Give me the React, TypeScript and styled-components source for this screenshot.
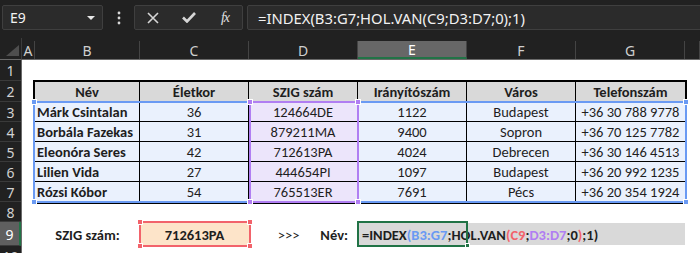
import React from "react";
import styled, { createGlobalStyle } from "styled-components";

const UI_FONT = `"Noto Sans", "Open Sans", sans-serif`;
const CELL_FONT = `Carlito, Lato, "Liberation Sans", sans-serif`;

const GlobalStyle = createGlobalStyle`
  html, body { margin: 0; padding: 0; background: #212121; overflow: hidden; }
  #root { width: 700px; height: 253px; overflow: hidden; }
  * { box-sizing: border-box; }
`;

const Page = styled.div`
  width: 700px;
  height: 253px;
  display: flex;
  flex-direction: column;
  background: #212121;
  overflow: hidden;
`;

/* ---------- toolbar ---------- */
const Toolbar = styled.div`
  height: 38px;
  flex: none;
  display: flex;
  align-items: flex-start;
  padding: 5px 0 0 2px;
  font-family: ${UI_FONT};
`;

const Box = styled.div<{ $w?: number }>`
  height: 25px;
  background: #2b2b2b;
  border: 1px solid #3f3f3f;
  border-radius: 2px;
  display: flex;
  align-items: center;
  ${(p) => (p.$w ? `width: ${p.$w}px; flex: none;` : `flex: 1; margin-right: -4px;`)}
`;

const NameText = styled.span`
  color: #f2f2f2;
  font-size: 14px;
  padding-left: 7px;
  flex: 1;
`;

const Caret = styled.span`
  width: 0;
  height: 0;
  border-left: 4px solid transparent;
  border-right: 4px solid transparent;
  border-top: 4px solid #e8e8e8;
  margin-right: 7px;
`;

const Dots = styled.div`
  width: 31px;
  height: 25px;
  flex: none;
  display: flex;
  align-items: center;
  justify-content: center;
`;

const BtnGroup = styled(Box)`
  margin-right: 4px;
  justify-content: flex-start;
  padding: 0;
`;

const IconBtn = styled.span`
  width: 36px;
  flex: none;
  display: flex;
  align-items: center;
  justify-content: center;
  color: #d6d6d6;
`;

const Fx = styled.span`
  font-family: "Liberation Serif", "DejaVu Serif", serif;
  font-style: italic;
  font-size: 14px;
  color: #e0e0e0;
  letter-spacing: -1px;
`;

const FormulaText = styled.span`
  color: #f2f2f2;
  font-size: 14.8px;
  padding-left: 10px;
  white-space: nowrap;
`;

/* ---------- sheet ---------- */
const Sheet = styled.div`
  flex: 1;
  display: grid;
  grid-template-columns: 22px 1fr;
  grid-template-rows: 22px 1fr;
  min-height: 0;
`;

const Corner = styled.div`
  border-bottom: 1px solid #6a6a6a;
  border-right: 1px solid #3c3c3c;
  display: flex;
  align-items: flex-end;
  justify-content: flex-end;
  padding: 0 2px 3px 0;
`;

const ColHeaders = styled.div`
  display: flex;
  padding-top: 3px;
  border-bottom: 1px solid #6a6a6a;
`;

const ColHead = styled.div<{ $w?: number; $active?: boolean }>`
  ${(p) => (p.$w ? `width: ${p.$w}px; flex: none;` : `flex: 1;`)}
  border-right: 1px solid #444;
  font-family: ${UI_FONT};
  font-size: 14px;
  color: ${(p) => (p.$active ? "#ffffff" : "#cfcfcf")};
  background: ${(p) => (p.$active ? "#676767" : "transparent")};
  border-bottom: ${(p) => (p.$active ? "2px solid #217346" : "none")};
  display: flex;
  align-items: center;
  justify-content: center;
  line-height: 1;
  padding-top: 1px;
`;

const RowHeaders = styled.div`
  display: flex;
  flex-direction: column;
  border-right: 1px solid #6a6a6a;
  overflow: hidden;
`;

const RowHead = styled.div<{ $h: number; $active?: boolean }>`
  height: ${(p) => p.$h}px;
  flex: none;
  border-bottom: 1px solid #3a3a3a;
  font-family: ${UI_FONT};
  font-size: 14px;
  color: ${(p) => (p.$active ? "#ffffff" : "#d2d2d2")};
  background: ${(p) => (p.$active ? "#5f5f5f" : "transparent")};
  border-right: ${(p) => (p.$active ? "2px solid #217346" : "none")};
  display: flex;
  align-items: center;
  justify-content: center;
  padding-top: 1px;
`;

const Canvas = styled.div`
  background: #ffffff;
  position: relative;
  display: flex;
  flex-direction: column;
  padding-top: 20px;
  font-family: ${CELL_FONT};
  font-size: 14.5px;
  color: #1e1e1e;
  overflow: hidden;
`;

const Table = styled.div`
  margin-left: 11px;
  width: 654px;
  border: 2px solid #000;
  display: grid;
  grid-template-columns: 105px repeat(5, 109px);
  grid-auto-rows: 20px;
`;

const Cell = styled.div<{
  $head?: boolean;
  $tint?: "blue" | "purple";
  $left?: boolean;
  $lastCol?: boolean;
  $lastRow?: boolean;
}>`
  border-right: ${(p) => (p.$lastCol ? "none" : "1px solid #000")};
  border-bottom: ${(p) => (p.$lastRow ? "none" : "1px solid #000")};
  background: ${(p) =>
    p.$head ? "#d9d9d9" : p.$tint === "purple" ? "#ece5fb" : "#eaf1fd"};
  font-weight: ${(p) => (p.$head || p.$left ? 700 : 400)};
  display: flex;
  align-items: center;
  justify-content: ${(p) => (p.$left ? "flex-start" : "center")};
  padding-left: ${(p) => (p.$left ? "2px" : "0")};
  white-space: nowrap;
  line-height: 1;
  padding-top: 1px;
`;

const Range = styled.div<{ $color: string }>`
  position: absolute;
  border: 2px solid ${(p) => p.$color};
  pointer-events: none;
`;

const Handle = styled.span<{ $color: string; $pos: "tl" | "tr" | "bl" | "br" }>`
  position: absolute;
  width: 6px;
  height: 6px;
  background: ${(p) => p.$color};
  border: 1px solid #ffffff;
  ${(p) => (p.$pos[0] === "t" ? "top: -4px;" : "bottom: -4px;")}
  ${(p) => (p.$pos[1] === "l" ? "left: -4px;" : "right: -4px;")}
`;

const Row9 = styled.div`
  margin-top: 18px;
  margin-left: 13px;
  height: 24px;
  display: flex;
  align-items: stretch;
  font-weight: 700;
`;

const LabelCell = styled.div<{ $w: number }>`
  width: ${(p) => p.$w}px;
  flex: none;
  display: flex;
  align-items: center;
  justify-content: center;
  padding-top: 1px;
`;

const LookupCell = styled.div`
  width: 109px;
  flex: none;
  position: relative;
  background: #fde4c9;
  display: flex;
  align-items: center;
  justify-content: center;
  padding-top: 1px;
`;

const PointerCell = styled.div`
  width: 109px;
  flex: none;
  display: flex;
  align-items: center;
  justify-content: flex-end;
  gap: 21px;
  padding: 1px 10px 0 0;
`;

const Arrows = styled.span`
  font-weight: 400;
`;

const FormulaCell = styled.div`
  width: 327px;
  flex: none;
  position: relative;
  margin: 1px 0;
  background: #d9d9d9;
  display: flex;
  align-items: center;
  padding: 1px 0 0 4px;
  white-space: nowrap;
`;

const Overlay = styled.div<{ $color: string; $w: number }>`
  position: absolute;
  left: -1px;
  top: -1px;
  width: ${(p) => p.$w}px;
  height: calc(100% + 2px);
  border: 2px solid ${(p) => p.$color};
  pointer-events: none;
`;

const ActiveOverlay = styled.div`
  position: absolute;
  left: -1px;
  top: -2px;
  width: 111px;
  height: calc(100% + 4px);
  border: 2px solid #217346;
  pointer-events: none;
`;

const FillHandle = styled.span`
  position: absolute;
  right: -4px;
  bottom: -3px;
  width: 5px;
  height: 5px;
  background: #217346;
  border: 1px solid #ffffff;
`;

const Tok = styled.span<{ $c?: string }>`
  color: ${(p) => p.$c ?? "#1e1e1e"};
`;

const BLUE = "#6a9af3";
const PURPLE = "#b07ef2";
const RED = "#f2636b";

const cols = [
  { l: "A", w: 13 },
  { l: "B", w: 105 },
  { l: "C", w: 109 },
  { l: "D", w: 109 },
  { l: "E", w: 109, active: true },
  { l: "F", w: 109 },
  { l: "G", w: 109 },
  { l: "", w: 0 },
];

const rowHeights = [21, 21, 20, 20, 20, 20, 20, 20, 24, 20];

const headers = ["Név", "Életkor", "SZIG szám", "Irányítószám", "Város", "Telefonszám"];
const data: string[][] = [
  ["Márk Csintalan", "36", "124664DE", "1122", "Budapest", "+36 30 788 9778"],
  ["Borbála Fazekas", "31", "879211MA", "9400", "Sopron", "+36 70 125 7782"],
  ["Eleonóra Seres", "42", "712613PA", "4024", "Debrecen", "+36 30 146 4513"],
  ["Lilien Vida", "27", "444654PI", "1097", "Budapest", "+36 20 992 1235"],
  ["Rózsi Kóbor", "54", "765513ER", "7691", "Pécs", "+36 20 354 1924"],
];

function Handles({ color }: { color: string }) {
  return (
    <>
      <Handle $color={color} $pos="tl" />
      <Handle $color={color} $pos="tr" />
      <Handle $color={color} $pos="bl" />
      <Handle $color={color} $pos="br" />
    </>
  );
}

export default function App() {
  return (
    <Page>
      <GlobalStyle />
      <Toolbar>
        <Box $w={101}>
          <NameText>E9</NameText>
          <Caret />
        </Box>
        <Dots>
          <svg width="4" height="14" viewBox="0 0 4 14">
            <circle cx="2" cy="2" r="1.4" fill="#d8d8d8" />
            <circle cx="2" cy="7" r="1.4" fill="#d8d8d8" />
            <circle cx="2" cy="12" r="1.4" fill="#d8d8d8" />
          </svg>
        </Dots>
        <BtnGroup $w={109}>
          <IconBtn>
            <svg width="12" height="12" viewBox="0 0 12 12">
              <path d="M1 1 L11 11 M11 1 L1 11" stroke="#d6d6d6" strokeWidth="1.6" />
            </svg>
          </IconBtn>
          <IconBtn>
            <svg width="14" height="11" viewBox="0 0 14 11">
              <path d="M1 5.5 L5 9.5 L13 1" stroke="#d6d6d6" strokeWidth="2.6" fill="none" />
            </svg>
          </IconBtn>
          <IconBtn>
            <Fx>fx</Fx>
          </IconBtn>
        </BtnGroup>
        <Box>
          <FormulaText>=INDEX(B3:G7;HOL.VAN(C9;D3:D7;0);1)</FormulaText>
        </Box>
      </Toolbar>
      <Sheet>
        <Corner>
          <svg width="13" height="11" viewBox="0 0 13 11">
            <path d="M13 0 L13 11 L0 11 Z" fill="#4e4e4e" />
          </svg>
        </Corner>
        <ColHeaders>
          {cols.map((c, i) => (
            <ColHead key={i} $w={c.w || undefined} $active={c.active}>
              {c.l}
            </ColHead>
          ))}
        </ColHeaders>
        <RowHeaders>
          {rowHeights.map((h, i) => (
            <RowHead key={i} $h={h} $active={i === 8}>
              {i + 1}
            </RowHead>
          ))}
        </RowHeaders>
        <Canvas>
          <Table>
            {headers.map((h, i) => (
              <Cell key={h} $head $lastCol={i === 5}>
                {h}
              </Cell>
            ))}
            {data.map((row, r) =>
              row.map((v, c) => (
                <Cell
                  key={`${r}-${c}`}
                  $left={c === 0}
                  $tint={c === 2 ? "purple" : "blue"}
                  $lastCol={c === 5}
                  $lastRow={r === 4}
                >
                  {v}
                </Cell>
              ))
            )}
          </Table>
          <Row9>
            <LabelCell $w={105}>SZIG szám:</LabelCell>
            <LookupCell>
              712613PA
              <Overlay $color={RED} $w={112}>
                <Handles color={RED} />
              </Overlay>
            </LookupCell>
            <PointerCell>
              <Arrows>&gt;&gt;&gt;</Arrows>
              <span>Név:</span>
            </PointerCell>
            <FormulaCell>
              <Tok>=INDEX</Tok>
              <Tok $c={BLUE}>(B3:G7</Tok>
              <Tok>;HOL.VAN</Tok>
              <Tok $c={RED}>(C9</Tok>
              <Tok>;</Tok>
              <Tok $c={PURPLE}>D3:D7</Tok>
              <Tok>;0</Tok>
              <Tok $c={RED}>)</Tok>
              <Tok>;1)</Tok>
              <ActiveOverlay>
                <FillHandle />
              </ActiveOverlay>
            </FormulaCell>
          </Row9>
          <Range $color={BLUE} style={{ left: 11, top: 41, width: 654, height: 102 }}>
            <Handles color={BLUE} />
          </Range>
          <Range $color={PURPLE} style={{ left: 227, top: 41, width: 110, height: 102 }}>
            <Handles color={PURPLE} />
          </Range>
        </Canvas>
      </Sheet>
    </Page>
  );
}
